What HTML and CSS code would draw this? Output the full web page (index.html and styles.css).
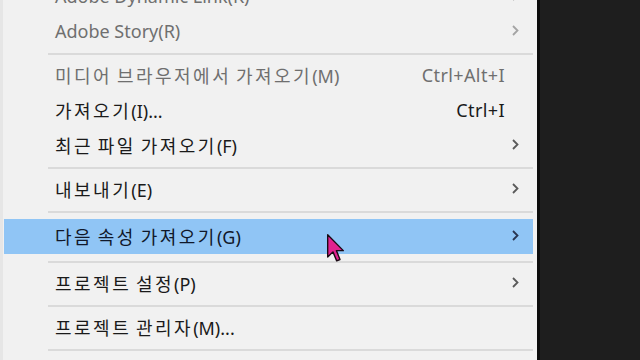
FILE: index.html
```html
<!DOCTYPE html>
<html lang="ko">
<head>
<meta charset="utf-8">
<link rel="stylesheet" href="styles.css">
</head>
<body>
<div class="screen">
  <div class="menu">
    <div class="items">
      <div class="item disabled"><span class="label">Adobe Dynamic Link(K)</span><span class="chev"><svg viewBox="0 0 7 11" width="7" height="11"><path d="M1 1 L5.5 5.5 L1 10" fill="none" stroke="currentColor" stroke-width="1.8"/></svg></span></div>
      <div class="item disabled"><span class="label">Adobe Story(R)</span><span class="chev"><svg viewBox="0 0 7 11" width="7" height="11"><path d="M1 1 L5.5 5.5 L1 10" fill="none" stroke="currentColor" stroke-width="1.8"/></svg></span></div>
      <div class="sep"></div>
      <div class="item disabled"><span class="label"><span class="ko">미디어</span> <span class="ko">브라우저에서</span> <span class="ko">가져오기</span>(M)</span><span class="key">Ctrl+Alt+I</span><span class="chev"></span></div>
      <div class="item"><span class="label"><span class="ko">가져오기</span>(I)...</span><span class="key">Ctrl+I</span><span class="chev"></span></div>
      <div class="item"><span class="label"><span class="ko">최근</span> <span class="ko">파일</span> <span class="ko">가져오기</span>(F)</span><span class="chev"><svg viewBox="0 0 7 11" width="7" height="11"><path d="M1 1 L5.5 5.5 L1 10" fill="none" stroke="currentColor" stroke-width="1.8"/></svg></span></div>
      <div class="sep"></div>
      <div class="item"><span class="label"><span class="ko">내보내기</span>(E)</span><span class="chev"><svg viewBox="0 0 7 11" width="7" height="11"><path d="M1 1 L5.5 5.5 L1 10" fill="none" stroke="currentColor" stroke-width="1.8"/></svg></span></div>
      <div class="sep"></div>
      <div class="item active"><span class="label"><span class="ko">다음</span> <span class="ko">속성</span> <span class="ko">가져오기</span>(G)</span><span class="chev"><svg viewBox="0 0 7 11" width="7" height="11"><path d="M1 1 L5.5 5.5 L1 10" fill="none" stroke="currentColor" stroke-width="1.8"/></svg></span>
        <svg class="cursor" viewBox="0 0 13 20" width="18" height="28"><path d="M0.5 0.5 L0.5 16.5 L4.3 12.8 L7 19.3 L9.4 18.3 L6.8 11.9 L11.8 11.9 Z" fill="#e2218f" stroke="#1a0a14" stroke-width="1" stroke-linejoin="round"/></svg>
      </div>
      <div class="sep"></div>
      <div class="item"><span class="label"><span class="ko">프로젝트</span> <span class="ko">설정</span>(P)</span><span class="chev"><svg viewBox="0 0 7 11" width="7" height="11"><path d="M1 1 L5.5 5.5 L1 10" fill="none" stroke="currentColor" stroke-width="1.8"/></svg></span></div>
      <div class="sep"></div>
      <div class="item"><span class="label"><span class="ko">프로젝트</span> <span class="ko">관리자</span>(M)...</span><span class="chev"></span></div>
      <div class="sep"></div>
    </div>
  </div>
  <div class="edge"></div>
  <div class="dark"></div>
</div>
</body>
</html>
```
FILE: styles.css
```css
html, body {
  margin: 0;
  padding: 0;
  width: 640px;
  height: 360px;
  overflow: hidden;
  background: #1e1e1e;
}
.screen {
  display: flex;
  height: 360px;
}
.menu {
  width: 537px;
  flex: none;
  background: #f1f1f1;
  overflow: hidden;
  box-sizing: border-box;
  border-left: 3px solid #e6e6e6;
  padding: 0 4px 0 1px;
}
.items {
  display: flex;
  flex-direction: column;
  margin-top: -21px;
}
.item {
  position: relative;
  height: 35px;
  box-sizing: border-box;
  display: flex;
  align-items: center;
  padding: 0 14px 2px 51px;
  font-family: "Noto Sans", "Noto Sans CJK KR", sans-serif;
  font-size: 18px;
  color: #1a1a1a;
  flex: none;
}
.item.disabled {
  color: #6f6f6f;
}
.item.active {
  background: #90c5f5;
  margin: 3px 0;
  color: #10182a;
}
.label {
  flex: 1;
  white-space: nowrap;
}
.ko {
  letter-spacing: 2.5px;
}
.key {
  font-size: 18px;
  letter-spacing: 0.4px;
}
.chev {
  width: 14px;
  display: flex;
  justify-content: flex-end;
  color: #5a5a5a;
}
.item.disabled .chev {
  color: #a4a4a4;
}
.item.active .chev {
  color: #2a3550;
}
.sep {
  height: 9px;
  flex: none;
  display: flex;
  align-items: center;
  padding-left: 44px;
}
.sep::before {
  content: "";
  display: block;
  flex: 1;
  height: 2px;
  background: #dadada;
}
.cursor {
  position: absolute;
  left: 323px;
  top: 15px;
}
.edge {
  width: 3px;
  flex: none;
  background: #0c0c0c;
}
.dark {
  flex: 1;
  background: #1e1e1e;
}
```
